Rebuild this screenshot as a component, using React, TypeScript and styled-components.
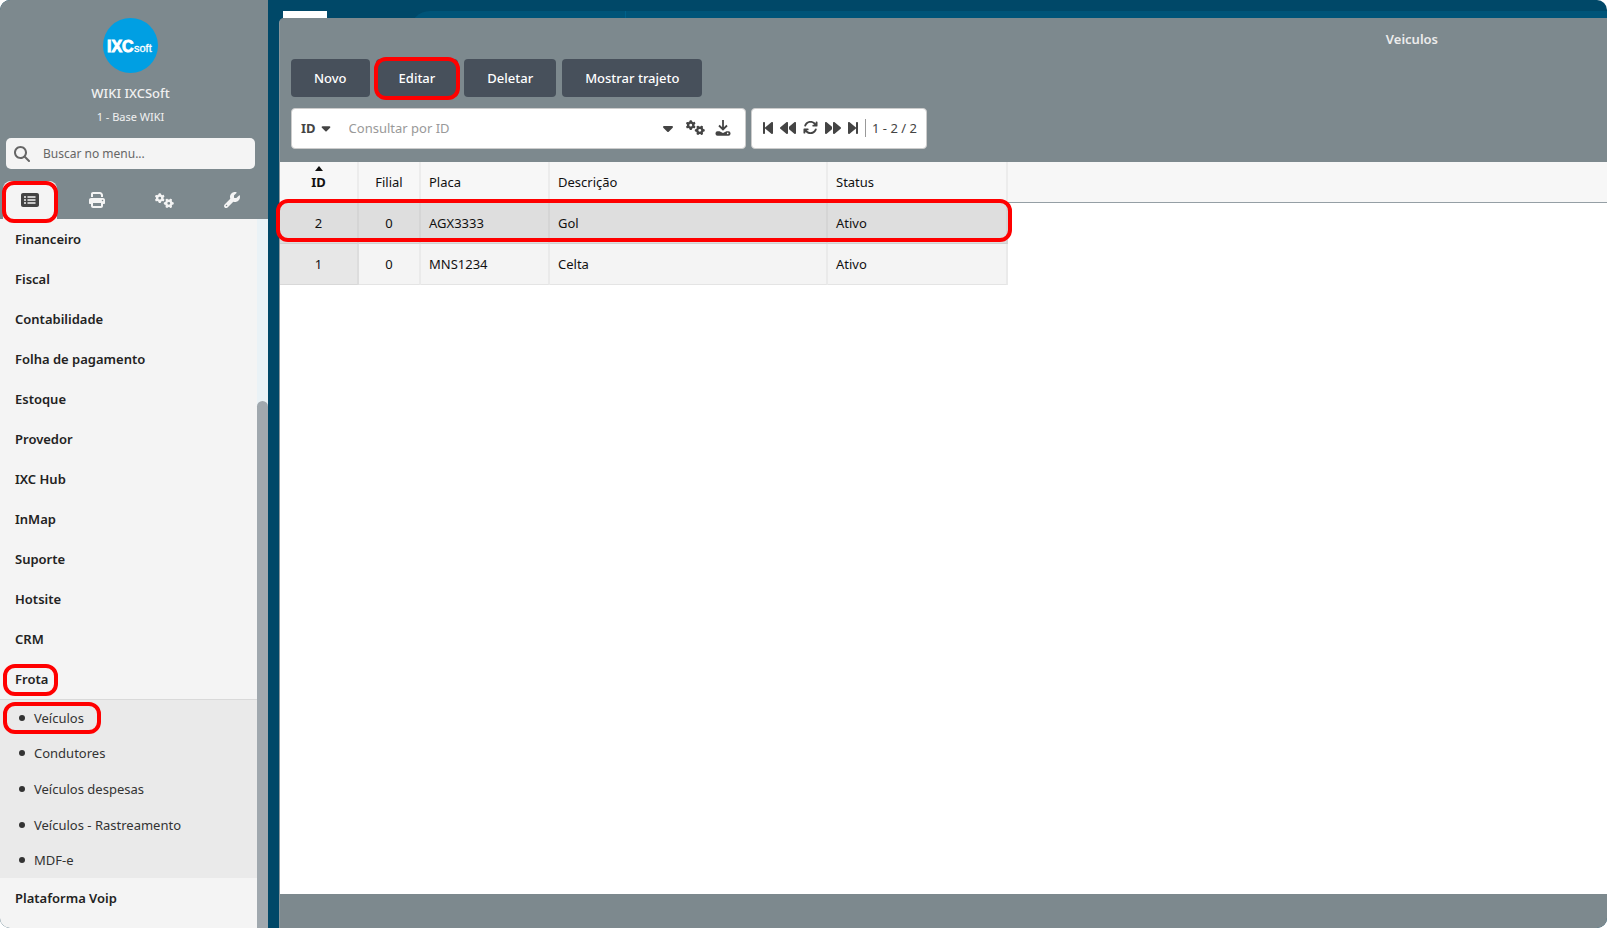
import React from 'react';
import styled, { createGlobalStyle, css } from 'styled-components';
import {
  FaArrowsRotate,
  FaBackward,
  FaBackwardStep,
  FaCaretDown,
  FaForward,
  FaForwardStep,
  FaGears,
  FaMagnifyingGlass,
  FaPrint,
  FaRectangleList,
  FaWrench,
} from 'react-icons/fa6';

const slate = '#7d898e';
const navy = '#004868';

const GlobalStyle = createGlobalStyle`
  *, *::before, *::after { box-sizing: border-box; }
  body {
    margin: 0;
    background: #fff;
    font-family: "Noto Sans", "Open Sans", sans-serif;
    font-size: 13px;
    line-height: 18px;
    color: #222;
  }
  button, input { font: inherit; color: inherit; }
  button { border: 0; padding: 0; background: none; cursor: pointer; }
  a { color: inherit; text-decoration: none; }
`;

const marked = css`
  position: relative;
  &::after {
    content: '';
    position: absolute;
    border: 4px solid #f00;
    border-radius: 12px;
    pointer-events: none;
    z-index: 2;
  }
`;

const Shell = styled.div`
  display: flex;
  min-height: 100vh;
  background: ${navy};
  border-radius: 10px;
  overflow: hidden;
`;

const Sidebar = styled.aside`
  flex: 0 0 268px;
  display: flex;
  flex-direction: column;
  background: ${slate};
`;

const Profile = styled.header`
  display: flex;
  flex-direction: column;
  align-items: center;
  padding: 18px 7px 12px 0;
  color: #f1f1f1;
`;

const Logo = styled.svg`
  width: 55px;
  height: 55px;
  margin-bottom: 11px;
`;

const ProfileName = styled.strong`
  font-weight: 500;
  margin-bottom: 6px;
`;

const ProfileBranch = styled.span`
  font-size: 11px;
`;

const MenuSearch = styled.label`
  display: flex;
  align-items: center;
  gap: 13px;
  height: 31px;
  margin: 0 13px 12px 6px;
  padding: 0 8px;
  border-radius: 5px;
  background: #f4f4f4;
  color: #666;
  svg { flex: none; width: 16px; height: 16px; }
`;

const MenuInput = styled.input`
  flex: 1;
  min-width: 0;
  border: 0;
  padding: 0;
  outline: 0;
  background: none;
  font-size: 12px;
  &::placeholder { color: #666; opacity: 1; }
`;

const Tabs = styled.nav`
  display: flex;
  gap: 13px;
  padding: 0 9px 0 3px;
`;

const Tab = styled.button<{ $active?: boolean }>`
  flex: 1;
  display: flex;
  align-items: center;
  justify-content: center;
  height: 38px;
  color: ${(p) => (p.$active ? '#444' : '#f4f4f4')};
  background: ${(p) => (p.$active ? '#f4f4f4' : 'none')};
  border-radius: 8px 8px 0 0;
  ${(p) =>
    p.$active &&
    css`
      ${marked}
      &::after { inset: 0 -1px -4px -1px; }
    `}
`;

const MenuArea = styled.div`
  flex: 1;
  display: flex;
  background: #f4f4f4;
`;

const MenuList = styled.ul`
  flex: 1;
  list-style: none;
  margin: 0;
  padding: 0;
`;

const MenuLink = styled.a<{ $marked?: boolean }>`
  display: flex;
  align-items: center;
  width: max-content;
  height: 40px;
  margin-left: 15px;
  font-weight: 600;
  ${(p) =>
    p.$marked &&
    css`
      ${marked}
      &::after { inset: 5px -10px 3px -12px; }
    `}
`;

const SubMenu = styled.ul`
  display: grid;
  grid-auto-rows: 1fr;
  height: 179px;
  list-style: none;
  margin: 0;
  padding: 0;
  border-top: 1px solid #d9d9d9;
  background: #eaeaea;
`;

const SubItem = styled.li`
  display: flex;
  margin-left: 19px;
`;

const SubLink = styled.a<{ $marked?: boolean }>`
  display: flex;
  align-items: center;
  gap: 9px;
  color: #333;
  &::before {
    content: '';
    width: 6px;
    height: 6px;
    border-radius: 3px;
    background: #333;
  }
  ${(p) =>
    p.$marked &&
    css`
      ${marked}
      &::after { inset: 2px -17px 2px -16px; }
    `}
`;

const ScrollTrack = styled.div`
  flex: 0 0 11px;
  display: grid;
  grid-template-rows: 182fr 527fr;
  background: #eaf2f6;
`;

const ScrollThumb = styled.div`
  grid-row: 2;
  border-radius: 6px 6px 0 0;
  background: #a0a8ae;
`;

const Main = styled.main`
  flex: 1;
  min-width: 0;
  display: flex;
  flex-direction: column;
  padding-left: 11px;
`;

const Desktop = styled.div`
  display: flex;
  align-items: flex-start;
  height: 18px;
  padding: 11px 0 0 4px;
  overflow: hidden;
`;

const DesktopTile = styled.div`
  width: 44px;
  height: 30px;
  background: #fff;
`;

const DesktopBar = styled.div`
  flex: 1;
  height: 30px;
  display: flex;
  margin-left: 83px;
  background: #005478;
  border-radius: 20px 0 0 0;
  &::before {
    content: '';
    width: 216px;
    border-right: 1px solid #00618a;
  }
`;

const Window = styled.section`
  flex: 1;
  display: flex;
  flex-direction: column;
  background: ${slate};
  border-left: 1px solid #8b969b;
  border-radius: 5px 0 0 0;
`;

const TitleBar = styled.h1`
  margin: 0;
  height: 41px;
  padding: 12px 169px 0 0;
  text-align: right;
  font-size: 13px;
  font-weight: 600;
  line-height: 18px;
  color: #ececec;
`;

const Actions = styled.div`
  display: flex;
  gap: 6px;
  padding-left: 11px;
`;

const ActionButton = styled.button<{ $marked?: boolean }>`
  height: 38px;
  padding: 0 23px;
  border-radius: 4px;
  background: #47505b;
  color: #fff;
  font-weight: 500;
  ${(p) =>
    p.$marked &&
    css`
      ${marked}
      &::after { inset: -2px -2px -3px -2px; }
    `}
`;

const Filters = styled.div`
  display: flex;
  gap: 5px;
  padding: 11px 0 13px 11px;
`;

const FilterBox = styled.div`
  display: flex;
  align-items: center;
  height: 41px;
  border: 1px solid #ccc;
  border-radius: 4px;
  background: #fff;
  color: #444;
`;

const QueryBox = styled(FilterBox)`
  width: 455px;
  padding: 0 14px 2px 9px;
`;

const FieldButton = styled.button`
  display: flex;
  align-items: center;
  gap: 3px;
  margin-right: 16px;
  font-weight: 700;
`;

const QueryInput = styled.input`
  flex: 1;
  min-width: 0;
  border: 0;
  padding: 0;
  outline: 0;
  background: none;
  &::placeholder { color: #999; opacity: 1; }
`;

const IconButton = styled.button<{ $narrow?: boolean }>`
  display: flex;
  justify-content: center;
  width: ${(p) => (p.$narrow ? '10px' : 'auto')};
  svg { flex: none; }
`;

const QueryTools = styled.div`
  display: flex;
  align-items: center;
  gap: 10px;
`;

const Pager = styled(FilterBox)`
  gap: 7px;
  padding: 0 9px 2px 11px;
`;

const PageCount = styled.span`
  padding-left: 6px;
  border-left: 1px solid #999;
`;

const TableArea = styled.div`
  flex: 1;
  background: linear-gradient(#f7f7f7 40px, #959fa5 40px, #959fa5 41px, #fff 41px);
`;

const Table = styled.table`
  table-layout: fixed;
  width: 728px;
  border-collapse: separate;
  border-spacing: 0;
  color: #111;
`;

const HeadCell = styled.th<{ $width: number; $center?: boolean; $sorted?: boolean }>`
  width: ${(p) => p.$width}px;
  height: 41px;
  padding: 0 8px 2px;
  border-right: 2px solid #ececec;
  text-align: ${(p) => (p.$center ? 'center' : 'left')};
  font-weight: ${(p) => (p.$sorted ? 700 : 400)};
  ${(p) =>
    p.$sorted &&
    css`
      position: relative;
      &::before {
        content: '';
        position: absolute;
        top: 4px;
        left: 50%;
        margin-left: -4px;
        border: 4px solid transparent;
        border-top-width: 0;
        border-bottom: 5px solid #111;
      }
    `}
`;

const Row = styled.tr<{ $selected?: boolean }>`
  background: ${(p) => (p.$selected ? '#dedede' : '#f4f4f4')};
  ${(p) =>
    p.$selected &&
    css`
      ${marked}
      &::after { inset: -4px -4px 2px -4px; }
    `}
`;

const Cell = styled.td<{ $center?: boolean; $sorted?: boolean }>`
  height: 41px;
  padding: 0 8px;
  border-right: 2px solid rgba(0, 0, 0, 0.04);
  border-bottom: 1px solid rgba(0, 0, 0, 0.06);
  text-align: ${(p) => (p.$center ? 'center' : 'left')};
  background: ${(p) => (p.$sorted ? 'rgba(0, 0, 0, 0.05)' : 'none')};
  ${Row}:first-child & { background: none; }
`;

const WindowFooter = styled.footer`
  height: 34px;
`;

const menu = [
  'Financeiro',
  'Fiscal',
  'Contabilidade',
  'Folha de pagamento',
  'Estoque',
  'Provedor',
  'IXC Hub',
  'InMap',
  'Suporte',
  'Hotsite',
  'CRM',
  'Frota',
  'Plataforma Voip',
];

const fleetMenu = ['Veículos', 'Condutores', 'Veículos despesas', 'Veículos - Rastreamento', 'MDF-e'];

const columns = [
  { label: 'ID', width: 79, center: true, sorted: true },
  { label: 'Filial', width: 62, center: true },
  { label: 'Placa', width: 129 },
  { label: 'Descrição', width: 278 },
  { label: 'Status', width: 180 },
];

const vehicles = [
  ['2', '0', 'AGX3333', 'Gol', 'Ativo'],
  ['1', '0', 'MNS1234', 'Celta', 'Ativo'],
];

const actions = ['Novo', 'Editar', 'Deletar', 'Mostrar trajeto'];

function DownloadIcon() {
  return (
    <svg width="16" height="16" viewBox="0 0 16 16" fill="none" stroke="currentColor" strokeWidth="2">
      <path d="M8 0V9M4 5.5L8 9.5L12 5.5" strokeWidth="1.800" />
      <path d="M0.5 13.200a2 2 0 0 1 2-2H4.500l3.500 1.800 3.500-1.800h2a2 2 0 0 1 2 2v.5a2 2 0 0 1-2 2h-11a2 2 0 0 1-2-2z" fill="currentColor" stroke="none" />
      <circle cx="12.700" cy="13.400" r="0.800" fill="#fff" stroke="none" />
    </svg>
  );
}

export default function App() {
  return (
    <>
      <GlobalStyle />
      <Shell>
        <Sidebar>
          <Profile>
            <Logo viewBox="0 0 55 55" role="img" aria-label="IXCsoft">
              <circle cx="27.500" cy="27.500" r="27.500" fill="#009fe3" />
              <text x="4" y="34" fill="#fff" fontFamily="Liberation Sans, sans-serif" fontWeight="700" fontSize="16" stroke="#fff" strokeWidth="0.900">IXC</text>
              <text x="31" y="34" fill="#fff" fontFamily="Liberation Sans, sans-serif" fontSize="11" stroke="#fff" strokeWidth="0.300">soft</text>
            </Logo>
            <ProfileName>WIKI IXCSoft</ProfileName>
            <ProfileBranch>1 - Base WIKI</ProfileBranch>
          </Profile>
          <MenuSearch>
            <FaMagnifyingGlass />
            <MenuInput placeholder="Buscar no menu..." aria-label="Buscar no menu" />
          </MenuSearch>
          <Tabs>
            <Tab $active aria-label="Menu"><FaRectangleList size={18} /></Tab>
            <Tab aria-label="Relatórios"><FaPrint size={16} /></Tab>
            <Tab aria-label="Configurações"><FaGears size={19} /></Tab>
            <Tab aria-label="Ferramentas"><FaWrench size={16} /></Tab>
          </Tabs>
          <MenuArea>
            <MenuList>
              {menu.map((item) => (
                <li key={item}>
                  <MenuLink href="#" $marked={item === 'Frota'}>{item}</MenuLink>
                  {item === 'Frota' && (
                    <SubMenu>
                      {fleetMenu.map((sub) => (
                        <SubItem key={sub}>
                          <SubLink href="#" $marked={sub === 'Veículos'}>{sub}</SubLink>
                        </SubItem>
                      ))}
                    </SubMenu>
                  )}
                </li>
              ))}
            </MenuList>
            <ScrollTrack>
              <ScrollThumb />
            </ScrollTrack>
          </MenuArea>
        </Sidebar>
        <Main>
          <Desktop>
            <DesktopTile />
            <DesktopBar />
          </Desktop>
          <Window>
            <TitleBar>Veiculos</TitleBar>
            <Actions>
              {actions.map((label) => (
                <ActionButton key={label} $marked={label === 'Editar'}>{label}</ActionButton>
              ))}
            </Actions>
            <Filters>
              <QueryBox>
                <FieldButton>ID <FaCaretDown size={14} /></FieldButton>
                <QueryInput placeholder="Consultar por ID" aria-label="Consultar por ID" />
                <QueryTools>
                  <IconButton aria-label="Opções"><FaCaretDown size={16} /></IconButton>
                  <IconButton aria-label="Filtros"><FaGears size={19} /></IconButton>
                  <IconButton aria-label="Exportar"><DownloadIcon /></IconButton>
                </QueryTools>
              </QueryBox>
              <Pager>
                <IconButton $narrow aria-label="Primeira"><FaBackwardStep size={16} /></IconButton>
                <IconButton aria-label="Anterior"><FaBackward size={16} /></IconButton>
                <IconButton aria-label="Atualizar"><FaArrowsRotate size={15} /></IconButton>
                <IconButton aria-label="Próxima"><FaForward size={16} /></IconButton>
                <IconButton $narrow aria-label="Última"><FaForwardStep size={16} /></IconButton>
                <PageCount>1 - 2 / 2</PageCount>
              </Pager>
            </Filters>
            <TableArea>
              <Table>
                <thead>
                  <tr>
                    {columns.map((c) => (
                      <HeadCell key={c.label} $width={c.width} $center={c.center} $sorted={c.sorted}>{c.label}</HeadCell>
                    ))}
                  </tr>
                </thead>
                <tbody>
                  {vehicles.map((v, r) => (
                    <Row key={v[0]} $selected={r === 0}>
                      {v.map((text, i) => (
                        <Cell key={columns[i].label} $center={columns[i].center} $sorted={columns[i].sorted}>{text}</Cell>
                      ))}
                    </Row>
                  ))}
                </tbody>
              </Table>
            </TableArea>
            <WindowFooter />
          </Window>
        </Main>
      </Shell>
    </>
  );
}
